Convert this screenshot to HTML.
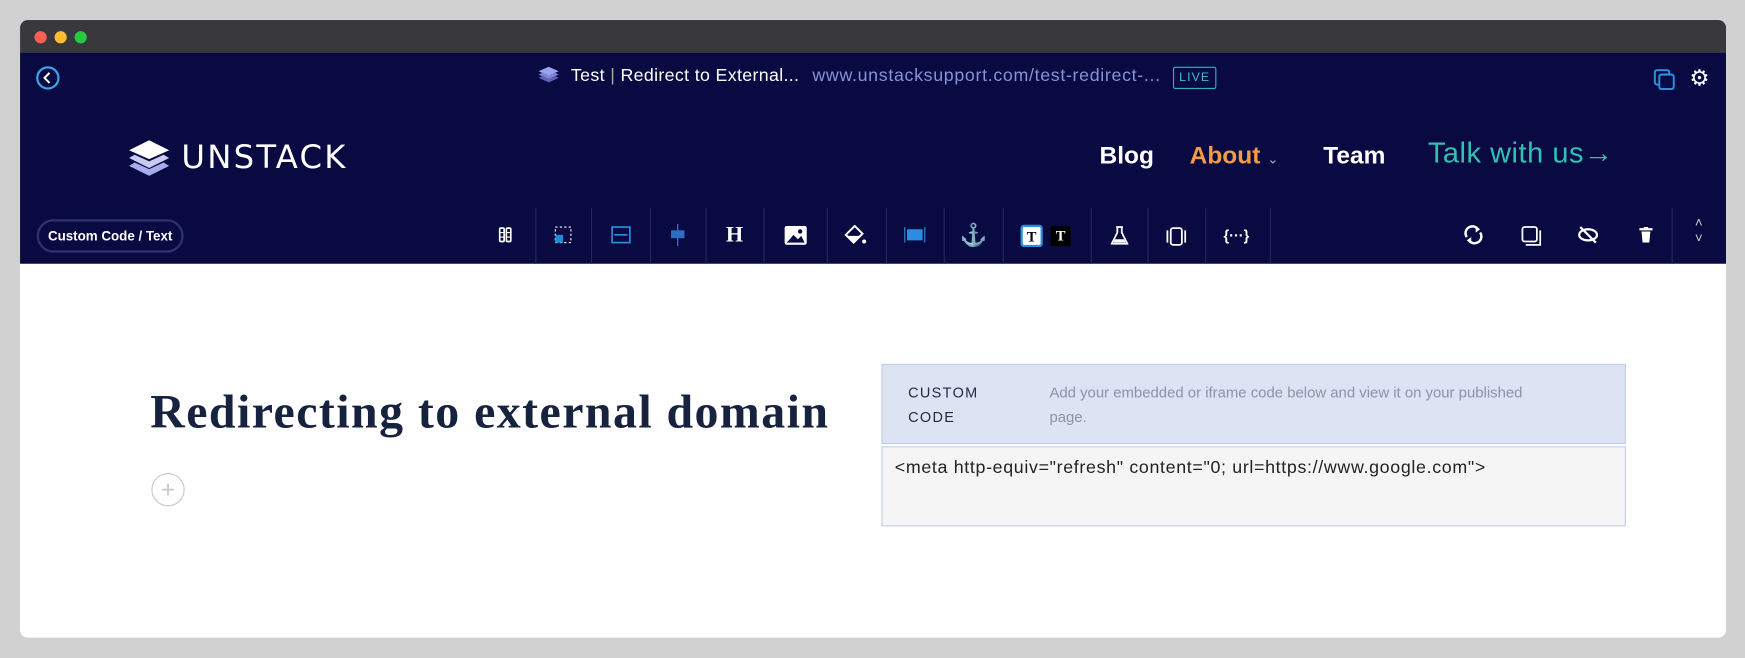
<!DOCTYPE html>
<html><head><meta charset="utf-8"><style>
*{margin:0;padding:0;box-sizing:border-box}
html,body{width:1745px;height:658px;overflow:hidden;background:#d1d1d1;font-family:"Liberation Sans",sans-serif}
#s{position:absolute;left:0;top:0;width:1568px;height:591px;transform:scale(1.11288);transform-origin:0 0}
.a{position:absolute}
.win{left:18px;top:18px;width:1533px;height:555px;background:#fff;border-radius:7px;overflow:hidden}
.tb{left:0;top:0;width:1533px;height:29px;background:#39393b}
.dot{top:10px;width:11px;height:11px;border-radius:50%}
.nav{left:0;top:29px;width:1533px;height:190px;background:#090a42}
.div{top:169px;width:1px;height:50px;background:#23265e}
.ic{top:176px;width:26px;height:26px;display:flex;align-items:center;justify-content:center;color:#fff}
</style></head><body><div id="s">
<div class="a win">
 <div class="a tb"></div>
 <div class="a dot" style="left:13px;background:#fe5f57"></div>
 <div class="a dot" style="left:31px;background:#febc2e"></div>
 <div class="a dot" style="left:49px;background:#28c840"></div>
 <div class="a nav">
  <svg class="a" style="left:14px;top:12px" width="22" height="22" viewBox="0 0 22 22"><circle cx="11" cy="11" r="9.5" fill="none" stroke="#3ba4ec" stroke-width="2"/><path d="M12.5 6.5 8 11l4.5 4.5" fill="none" stroke="#fff" stroke-width="1.8"/></svg>
  <svg class="a" style="left:464px;top:13px" width="22" height="20" viewBox="0 0 22 20"><path d="M11 14 2 10l3-1.5L11 11l6-2.5 3 1.5z" fill="#5a63b8"/><path d="M11 11 2 7l3-1.5L11 8l6-2.5 3 1.5z" fill="#7d86d8"/><path d="M11 8 2 4l9-4 9 4z" fill="#9aa3ee"/></svg>
  <div class="a" style="left:495px;top:13px;color:#fff;font-size:16px;letter-spacing:.3px">Test <span style="color:#aaa">|</span> Redirect to External...</div>
  <div class="a" style="left:712px;top:13px;color:#8793d6;font-size:16px;letter-spacing:.6px">www.unstacksupport.com/test-redirect-...</div>
  <div class="a" style="left:1036px;top:13px;width:39px;height:20px;border:1px solid #2ab3c8;border-radius:2px;color:#37c0d2;font-size:11px;text-align:center;line-height:18px;letter-spacing:1px">LIVE</div>
  <svg class="a" style="left:1467px;top:14px" width="22" height="22" viewBox="0 0 22 22"><rect x="2" y="2" width="13" height="13" rx="2" fill="none" stroke="#2b8ddd" stroke-width="1.8"/><rect x="6" y="6" width="13" height="13" rx="2" fill="#090a42" stroke="#2b8ddd" stroke-width="1.8"/></svg>
  <div class="a" style="left:1500px;top:11px;color:#fff;font-size:20px">⚙</div>
  <svg class="a" style="left:97px;top:79px" width="38" height="32" viewBox="0 0 38 32"><path d="M19 32 1 23l5-3 13 6 13-6 5 3z" fill="#a7acec"/><path d="M19 25 1 16l5-3 13 6 13-6 5 3z" fill="#c8ccf5"/><path d="M19 17 1 9 19 0l18 9z" fill="#fff"/></svg>
  <div class="a" style="left:145px;top:77px;color:#fff;font-size:29px;letter-spacing:2px;font-family:'DejaVu Sans',sans-serif">UNSTACK</div>
  <div class="a" style="left:970px;top:80px;color:#fff;font-size:22px;font-weight:bold">Blog</div>
  <div class="a" style="left:1051px;top:80px;color:#f39b45;font-size:22px;font-weight:bold">About <span style="font-size:12px;color:#aaa;font-weight:normal">⌄</span></div>
  <div class="a" style="left:1171px;top:80px;color:#fff;font-size:22px;font-weight:bold">Team</div>
  <div class="a" style="left:1265px;top:75px;color:#2ec2b1;font-size:26px;letter-spacing:.5px">Talk with us→</div>
  <div class="a" style="left:0;top:-29px;width:1533px;height:219px">
  <div class="a" style="left:15px;top:179px;width:132px;height:30px;border:2px solid #2e3270;border-radius:15px;color:#fff;font-size:12px;font-weight:bold;text-align:center;line-height:26px">Custom Code / Text</div>
  <div class="a div" style="left:463px"></div><div class="a div" style="left:513px"></div><div class="a div" style="left:566px"></div><div class="a div" style="left:616px"></div><div class="a div" style="left:668px"></div><div class="a div" style="left:725px"></div><div class="a div" style="left:778px"></div><div class="a div" style="left:830px"></div><div class="a div" style="left:883px"></div><div class="a div" style="left:962px"></div><div class="a div" style="left:1013px"></div><div class="a div" style="left:1065px"></div><div class="a div" style="left:1123px"></div><div class="a div" style="left:1484px"></div>
  <svg class="a" style="left:430px;top:186px" width="12" height="14"><rect x="1" y="1" width="4" height="12" rx="1" fill="none" stroke="#fff" stroke-width="1.5"/><rect x="7" y="1" width="4" height="12" rx="1" fill="none" stroke="#fff" stroke-width="1.5"/><path d="M1 5h4M1 9h4M7 5h4M7 9h4" stroke="#fff"/></svg>
  <svg class="a" style="left:480px;top:185px" width="16" height="16"><rect x="1" y="1" width="14" height="14" fill="none" stroke="#fff" stroke-dasharray="2 2"/><rect x="1" y="8" width="7" height="7" fill="#1e8bd6"/></svg>
  <svg class="a" style="left:531px;top:185px" width="18" height="16"><rect x="1" y="1" width="16" height="14" fill="none" stroke="#2b8ddd" stroke-width="1.5"/><path d="M3 8h12" stroke="#2b8ddd" stroke-width="1.5"/></svg>
  <svg class="a" style="left:584px;top:183px" width="14" height="20"><path d="M7 0v20" stroke="#2b8ddd"/><rect x="1" y="6" width="12" height="7" fill="#2b6fc0"/></svg>
  <div class="a ic" style="left:629px;top:180px;font-family:'Liberation Serif',serif;font-weight:bold;font-size:20px">H</div>
  <svg class="a" style="left:687px;top:185px" width="20" height="17"><rect width="20" height="17" rx="2" fill="#fff"/><path d="M2 15l6-7 4 4 3-3 3 6z" fill="#090a42"/><circle cx="14" cy="5" r="2" fill="#090a42"/></svg>
  <svg class="a" style="left:741px;top:184px" width="20" height="20"><path d="M9 1 1 9l7 7 8-8z" fill="none" stroke="#fff" stroke-width="1.8"/><path d="M2 10h13l-7 7z" fill="#fff"/><circle cx="17.5" cy="15" r="1.8" fill="#fff"/></svg>
  <svg class="a" style="left:794px;top:186px" width="20" height="14"><path d="M1 0v14M19 0v14" stroke="#2b8ddd"/><rect x="3" y="2" width="14" height="10" fill="#2b8ddd"/></svg>
  <div class="a ic" style="left:844px;top:180px;font-size:20px">⚓</div>
  <div class="a" style="left:899px;top:184px;width:20px;height:20px;border:2px solid #2b8ddd;border-radius:3px;background:#fff;color:#000;font:bold 13px 'Liberation Serif',serif;text-align:center;line-height:17px">T</div>
  <div class="a" style="left:926px;top:185px;width:18px;height:18px;background:#000;color:#fff;font:bold 13px 'Liberation Serif',serif;text-align:center;line-height:18px">T</div>
  <svg class="a" style="left:980px;top:185px" width="16" height="17"><path d="M5 1h6M6 1v5L1 16h14L10 6V1" fill="none" stroke="#fff" stroke-width="1.6"/><path d="M4 12h8l1.5 3h-11z" fill="#fff"/></svg>
  <svg class="a" style="left:1030px;top:186px" width="18" height="17"><rect x="4" y="1" width="10" height="15" rx="2" fill="none" stroke="#fff" stroke-width="1.6"/><path d="M1 3v11M17 3v11" stroke="#fff" stroke-width="1.6"/></svg>
  <div class="a ic" style="left:1080px;top:180px;font-size:13px;font-weight:bold">{···}</div>
  <svg class="a" style="left:1297px;top:184px" width="18" height="18"><path d="M3 11A6 6 0 0 1 13 4M15 7a6 6 0 0 1-10 7" fill="none" stroke="#fff" stroke-width="2.2"/><path d="M11 1l4 3-4 3zM7 17l-4-3 4-3z" fill="#fff"/></svg>
  <svg class="a" style="left:1349px;top:185px" width="18" height="18"><rect x="1" y="1" width="13" height="13" rx="2" fill="none" stroke="#fff" stroke-width="1.6"/><path d="M4 17h13V4" fill="none" stroke="#fff" stroke-width="1.6"/></svg>
  <svg class="a" style="left:1400px;top:185px" width="18" height="16"><ellipse cx="9" cy="8" rx="8" ry="5" fill="none" stroke="#fff" stroke-width="2"/><path d="M2 1l14 14" stroke="#fff" stroke-width="2"/></svg>
  <svg class="a" style="left:1455px;top:186px" width="12" height="14"><path d="M0 2h12M4 0h4" stroke="#fff" stroke-width="2"/><path d="M2 4h8l-1 10H3z" fill="#fff"/></svg>
  <div class="a" style="left:1505px;top:175px;color:#ccc;font-size:12px;line-height:14px">˄<br>˅</div>
  </div>
 </div>
 <div class="a" style="left:117px;top:328px;color:#17223f;font:bold 43px 'Liberation Serif',serif;letter-spacing:1.3px;white-space:nowrap">Redirecting to external domain</div>
 <div class="a" style="left:118px;top:407px;width:30px;height:30px;border:1.5px solid #c9c9c9;border-radius:50%;color:#c9c9c9;font-size:22px;text-align:center;line-height:27px">+</div>
 <div class="a" style="left:774px;top:309px;width:669px;height:72px;background:#dce3f2;border:1px solid #c3cde3"></div>
 <div class="a" style="left:798px;top:324px;color:#1f2a44;font-size:13px;letter-spacing:1.2px;line-height:22px">CUSTOM<br>CODE</div>
 <div class="a" style="left:925px;top:324px;color:#8a93a8;font-size:13.4px;line-height:22px;width:462px">Add your embedded or iframe code below and view it on your published page.</div>
 <div class="a" style="left:774px;top:383px;width:669px;height:72px;background:#f5f5f5;border:1px solid #c3cde3"></div>
 <div class="a" style="left:786px;top:394px;color:#222;font-size:16px;letter-spacing:.6px;white-space:nowrap">&lt;meta http-equiv="refresh" content="0; url=https://www.google.com"&gt;</div>
</div>
</div></body></html>
